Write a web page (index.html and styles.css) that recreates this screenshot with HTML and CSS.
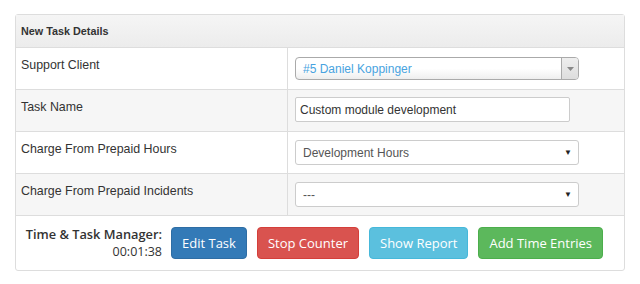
FILE: index.html
```html
<!DOCTYPE html>
<html>
<head>
<meta charset="utf-8">
<link rel="stylesheet" href="styles.css">
</head>
<body>
<div class="panel">
  <div class="head">New Task Details</div>
  <div class="row">
    <div class="label">Support Client</div>
    <div class="field">
      <div class="s2"><span class="s2-text">#5 Daniel Koppinger</span><span class="s2-arrow"><svg width="7" height="4" viewBox="0 0 7 4"><path d="M0 0H7L3.5 4Z" fill="#888"/></svg></span></div>
    </div>
  </div>
  <div class="row alt">
    <div class="label">Task Name</div>
    <div class="field">
      <div class="input">Custom module development</div>
    </div>
  </div>
  <div class="row">
    <div class="label">Charge From Prepaid Hours</div>
    <div class="field">
      <div class="sel"><span class="sel-text">Development Hours</span><span class="caret">&#9660;</span></div>
    </div>
  </div>
  <div class="row alt">
    <div class="label">Charge From Prepaid Incidents</div>
    <div class="field">
      <div class="sel"><span class="sel-text">---</span><span class="caret">&#9660;</span></div>
    </div>
  </div>
  <div class="foot">
    <div class="timer">
      <div class="timer-title">Time &amp; Task Manager:</div>
      <div class="timer-val">00:01:38</div>
    </div>
    <div class="btns">
      <span class="btn blue">Edit Task</span>
      <span class="btn red">Stop Counter</span>
      <span class="btn cyan">Show Report</span>
      <span class="btn green">Add Time Entries</span>
    </div>
  </div>
</div>
</body>
</html>
```
FILE: styles.css
```css
* { box-sizing: border-box; }
body {
  margin: 0;
  padding: 14px 15px 0 15px;
  background: #fff;
  font-family: "Liberation Sans", Arial, sans-serif;
  color: #333;
  white-space: nowrap;
}
.panel {
  width: 610px;
  border: 1px solid #ddd;
  border-radius: 3px;
}
.head {
  height: 33px;
  padding: 0 5px;
  display: flex;
  align-items: center;
  font-weight: bold;
  font-size: 10.8px;
  background: linear-gradient(#f5f5f5, #ececec);
  border-bottom: 1px solid #ddd;
}
.row {
  display: flex;
  height: 42px;
  border-bottom: 1px solid #ddd;
  background: #fff;
}
.row.alt { background: #f6f6f6; }
.label {
  width: 272px;
  border-right: 1px solid #ddd;
  padding: 10px 5px 0 5px;
  font-size: 12.4px;
}
.field {
  flex: 1;
  padding: 0 7px;
  display: flex;
  align-items: center;
}
.s2 {
  width: 284px;
  height: 23px;
  border: 1px solid #aaa;
  border-radius: 4px;
  background: linear-gradient(#fff 0%, #fff 50%, #eee 100%);
  display: flex;
  align-items: center;
  font-size: 12px;
  color: #48a3e0;
  overflow: hidden;
}
.s2-text { flex: 1; padding-left: 7px; }
.s2-arrow {
  width: 17px;
  height: 100%;
  border-left: 1px solid #aaa;
  background: linear-gradient(#eee, #ddd);
  display: flex;
  align-items: center;
  justify-content: center;
}
.input {
  width: 275px;
  height: 25px;
  border: 1px solid #ccc;
  border-radius: 2px;
  background: #fff;
  display: flex;
  align-items: center;
  padding-left: 4px;
  font-size: 12px;
  color: #333;
  margin-top: -2px;
}
.sel {
  width: 284px;
  height: 25px;
  border: 1px solid #ccc;
  border-radius: 3px;
  background: #fff;
  display: flex;
  align-items: center;
  padding: 0 6px 0 7px;
  font-size: 12px;
  color: #555;
}
.sel-text { flex: 1; }
.caret { font-size: 8px; color: #222; }
.foot {
  height: 54px;
  display: flex;
  align-items: center;
  padding-left: 9px;
}
.timer {
  width: 137px;
  text-align: right;
  font-family: "Open Sans", sans-serif;
  color: #333;
  margin-top: -1px;
}
.timer-title { font-size: 12.8px; font-weight: 600; line-height: 18px; }
.timer-val { font-size: 12.5px; line-height: 18px; }
.btns {
  display: flex;
  gap: 10px;
  margin-left: 9px;
}
.btn {
  font-family: "Open Sans", sans-serif;
  font-size: 13px;
  color: #fff;
  height: 32px;
  padding: 0 10px;
  display: flex;
  align-items: center;
  border: 1px solid;
  border-radius: 4px;
}
.blue { background: #337ab7; border-color: #2e6da4; }
.red { background: #d9534f; border-color: #d43f3a; }
.cyan { background: #5bc0de; border-color: #46b8da; }
.green { background: #5cb85c; border-color: #4cae4c; }
```
